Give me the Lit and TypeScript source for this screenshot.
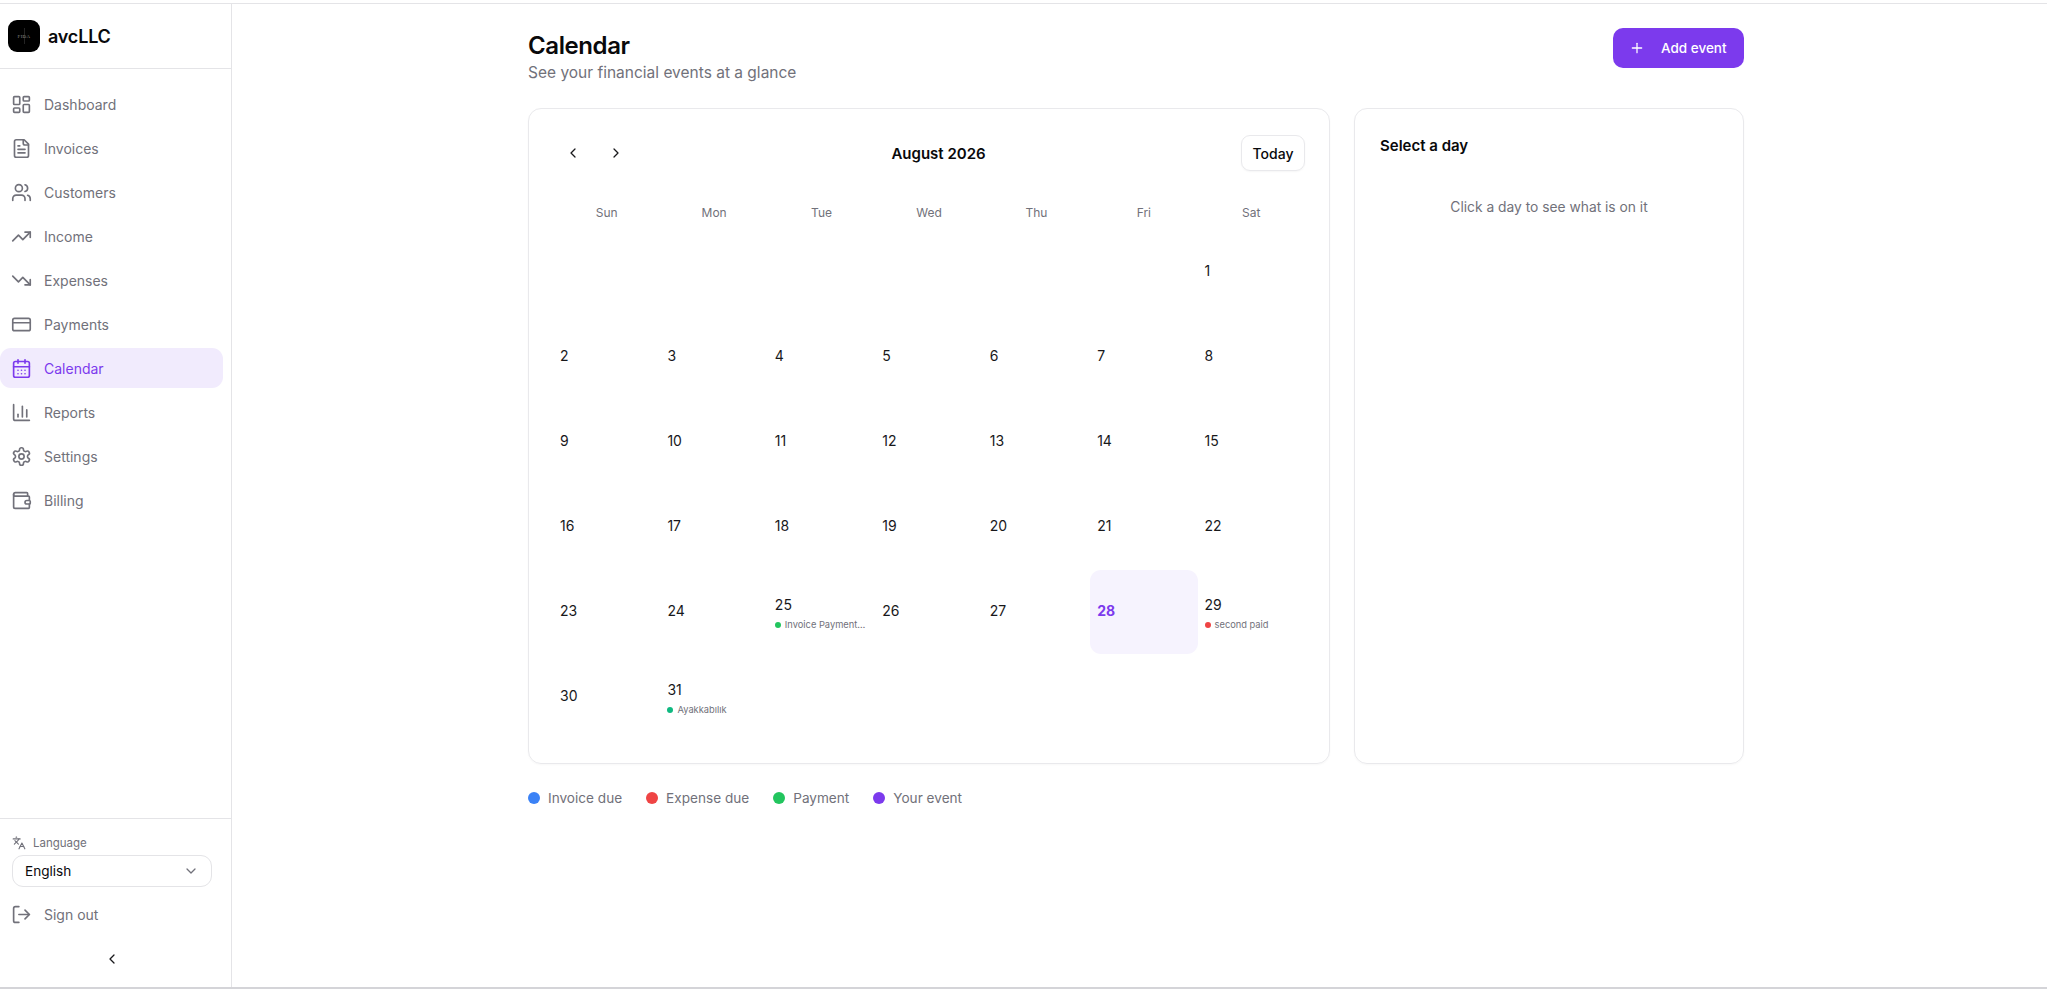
import { LitElement, html, css, svg } from 'lit';
import { customElement } from 'lit/decorators.js';

const icons: Record<string, unknown> = {
  dashboard: svg`<rect width="7" height="9" x="3" y="3" rx="1"/><rect width="7" height="5" x="14" y="3" rx="1"/><rect width="7" height="9" x="14" y="12" rx="1"/><rect width="7" height="5" x="3" y="16" rx="1"/>`,
  file: svg`<path d="M15 2H6a2 2 0 0 0-2 2v16a2 2 0 0 0 2 2h12a2 2 0 0 0 2-2V7Z"/><path d="M14 2v4a2 2 0 0 0 2 2h4"/><path d="M10 9H8"/><path d="M16 13H8"/><path d="M16 17H8"/>`,
  users: svg`<path d="M16 21v-2a4 4 0 0 0-4-4H6a4 4 0 0 0-4 4v2"/><circle cx="9" cy="7" r="4"/><path d="M22 21v-2a4 4 0 0 0-3-3.87"/><path d="M16 3.13a4 4 0 0 1 0 7.75"/>`,
  up: svg`<polyline points="22 7 13.5 15.5 8.5 10.5 2 17"/><polyline points="16 7 22 7 22 13"/>`,
  down: svg`<polyline points="22 17 13.5 8.5 8.5 13.5 2 7"/><polyline points="16 17 22 17 22 11"/>`,
  card: svg`<rect width="20" height="14" x="2" y="5" rx="2"/><line x1="2" x2="22" y1="10" y2="10"/>`,
  calendar: svg`<path d="M8 2v4"/><path d="M16 2v4"/><rect width="18" height="18" x="3" y="4" rx="2"/><path d="M3 10h18"/><path d="M8 14h.01"/><path d="M12 14h.01"/><path d="M16 14h.01"/><path d="M8 18h.01"/><path d="M12 18h.01"/><path d="M16 18h.01"/>`,
  chart: svg`<path d="M3 3v16a2 2 0 0 0 2 2h16"/><path d="M18 17V9"/><path d="M13 17V5"/><path d="M8 17v-3"/>`,
  gear: svg`<path d="M12.22 2h-.44a2 2 0 0 0-2 2v.18a2 2 0 0 1-1 1.73l-.43.25a2 2 0 0 1-2 0l-.15-.08a2 2 0 0 0-2.73.73l-.22.38a2 2 0 0 0 .73 2.73l.15.1a2 2 0 0 1 1 1.72v.51a2 2 0 0 1-1 1.74l-.15.09a2 2 0 0 0-.73 2.73l.22.38a2 2 0 0 0 2.73.73l.15-.08a2 2 0 0 1 2 0l.43.25a2 2 0 0 1 1 1.73V20a2 2 0 0 0 2 2h.44a2 2 0 0 0 2-2v-.18a2 2 0 0 1 1-1.73l.43-.25a2 2 0 0 1 2 0l.15.08a2 2 0 0 0 2.73-.73l.22-.39a2 2 0 0 0-.73-2.73l-.15-.08a2 2 0 0 1-1-1.74v-.5a2 2 0 0 1 1-1.74l.15-.09a2 2 0 0 0 .73-2.73l-.22-.38a2 2 0 0 0-2.73-.73l-.15.08a2 2 0 0 1-2 0l-.43-.25a2 2 0 0 1-1-1.73V4a2 2 0 0 0-2-2z"/><circle cx="12" cy="12" r="3"/>`,
  wallet: svg`<path d="M19 7V4a1 1 0 0 0-1-1H5a2 2 0 0 0 0 4h15a1 1 0 0 1 1 1v4h-3a2 2 0 0 0 0 4h3a1 1 0 0 0 1-1v-2a1 1 0 0 0-1-1"/><path d="M3 5v14a2 2 0 0 0 2 2h15a1 1 0 0 0 1-1v-4"/>`,
  languages: svg`<path d="m5 8 6 6"/><path d="m4 14 6-6 2-3"/><path d="M2 5h12"/><path d="M7 2h1"/><path d="m22 22-5-10-5 10"/><path d="M14 18h6"/>`,
  logout: svg`<path d="M9 21H5a2 2 0 0 1-2-2V5a2 2 0 0 1 2-2h4"/><polyline points="16 17 21 12 16 7"/><line x1="21" x2="9" y1="12" y2="12"/>`,
  left: svg`<path d="m15 18-6-6 6-6"/>`,
  right: svg`<path d="m9 18 6-6-6-6"/>`,
  chevronDown: svg`<path d="m6 9 6 6 6-6"/>`,
  plus: svg`<path d="M5 12h14"/><path d="M12 5v14"/>`,
};

const icon = (name: string, size = 21) => html`<svg
  width=${size}
  height=${size}
  viewBox="0 0 24 24"
  fill="none"
  stroke="currentColor"
  stroke-width="1.9"
  stroke-linecap="round"
  stroke-linejoin="round"
>${icons[name]}</svg>`;

const navItems = [
  ['dashboard', 'Dashboard'],
  ['file', 'Invoices'],
  ['users', 'Customers'],
  ['up', 'Income'],
  ['down', 'Expenses'],
  ['card', 'Payments'],
  ['calendar', 'Calendar'],
  ['chart', 'Reports'],
  ['gear', 'Settings'],
  ['wallet', 'Billing'],
];

const events: Record<number, { label: string; color: string }> = {
  25: { label: 'Invoice Payment…', color: '#22c55e' },
  29: { label: 'second paid', color: '#ef4444' },
  31: { label: 'Ayakkabılık', color: '#10b981' },
};

const legend = [
  ['#3b82f6', 'Invoice due'],
  ['#ef4444', 'Expense due'],
  ['#22c55e', 'Payment'],
  ['#7c3aed', 'Your event'],
];

@customElement('app-root')
export class AppRoot extends LitElement {
  static styles = css`
    :host {
      display: block;
      height: 989px;
      box-sizing: border-box;
      padding-top: 3px;
      overflow: hidden;
      background: #fff;
      color: #09090b;
      font-family: 'Inter', 'Noto Sans', sans-serif;
    }
    * {
      box-sizing: border-box;
    }
    svg {
      display: block;
      flex: none;
    }
    .shell {
      display: flex;
      height: 986px;
      border-top: 1px solid #e4e4e7;
      border-bottom: 2px solid #d4d4d8;
    }
    .sidebar {
      width: 232px;
      flex: none;
      display: flex;
      flex-direction: column;
      border-right: 1px solid #e4e4e7;
    }
    .brand {
      height: 65px;
      display: flex;
      align-items: center;
      gap: 8px;
      padding: 0 8px;
      border-bottom: 1px solid #e4e4e7;
      font-size: 18px;
      font-weight: 600;
      letter-spacing: -0.2px;
    }
    .logo {
      width: 32px;
      height: 32px;
      border-radius: 9px;
      background: #000;
      display: flex;
      align-items: center;
      justify-content: center;
      position: relative;
      color: #8a8a8a;
      font-family: 'Liberation Serif', serif;
      font-size: 5px;
      font-weight: 400;
      letter-spacing: 0.3px;
    }
    .logo::after {
      content: '';
      position: absolute;
      left: 50%;
      top: 8px;
      bottom: 8px;
      width: 1px;
      background: rgba(255, 255, 255, 0.14);
    }
    nav {
      flex: 1;
      display: flex;
      flex-direction: column;
      gap: 4px;
      padding: 15px 8px 0 0;
    }
    .item {
      height: 40px;
      display: flex;
      align-items: center;
      gap: 12px;
      padding-left: 11px;
      border-radius: 11px;
      color: #71717a;
      font-size: 14px;
    }
    .item.active {
      background: #f1ebfd;
      color: #7c3aed;
    }
    .foot {
      border-top: 1px solid #e4e4e7;
      padding: 15px 19px 0 12px;
      height: 169px;
    }
    .lang {
      display: flex;
      align-items: center;
      gap: 7px;
      color: #71717a;
      font-size: 11.5px;
      height: 18px;
      margin-bottom: 3px;
    }
    .select {
      height: 32px;
      border: 1px solid #e4e4e7;
      border-radius: 11px;
      display: flex;
      align-items: center;
      justify-content: space-between;
      padding: 0 12px;
      font-size: 13.6px;
    }
    .select svg {
      color: #71717a;
    }
    .signout {
      margin: 7px 0 0 -12px;
    }
    .collapse {
      display: flex;
      justify-content: center;
      margin: 17px 0 0 0;
      color: #18181b;
    }
    main {
      flex: 1;
      padding: 24px 0 0 296px;
    }
    .page {
      width: 1216px;
    }
    .head {
      display: flex;
      justify-content: space-between;
      align-items: flex-start;
      height: 80px;
    }
    h1 {
      margin: 3px 0 0;
      font-size: 24px;
      line-height: 30px;
      font-weight: 600;
      letter-spacing: -0.4px;
    }
    .sub {
      color: #71717a;
      font-size: 15.5px;
      line-height: 22px;
      margin-top: 1px;
    }
    .add {
      width: 131px;
      height: 40px;
      border-radius: 10px;
      background: #7c3aed;
      color: #fff;
      display: flex;
      align-items: center;
      gap: 16px;
      padding-left: 16px;
      font-size: 13.5px;
      font-weight: 500;
    }
    .cols {
      display: grid;
      grid-template-columns: 802px 390px;
      gap: 24px;
    }
    .card {
      height: 656px;
      border: 1px solid #e9e9ec;
      border-radius: 13px;
      box-shadow: 0 1px 2px rgba(0, 0, 0, 0.03);
    }
    .cal {
      padding: 26px 24px 0;
    }
    .bar {
      height: 36px;
      display: flex;
      align-items: center;
      justify-content: space-between;
    }
    .navs {
      display: flex;
      gap: 3px;
      color: #18181b;
    }
    .navs div {
      width: 40px;
      height: 36px;
      display: flex;
      align-items: center;
      justify-content: center;
    }
    .month {
      font-size: 15px;
      font-weight: 600;
    }
    .today {
      width: 64px;
      height: 36px;
      border: 1px solid #e9e9ec;
      border-radius: 9px;
      display: flex;
      align-items: center;
      justify-content: center;
      font-size: 14px;
      font-weight: 500;
      box-shadow: 0 1px 2px rgba(0, 0, 0, 0.04);
    }
    .weekdays,
    .days {
      display: grid;
      grid-template-columns: repeat(7, 1fr);
    }
    .weekdays {
      height: 59px;
      align-items: center;
      text-align: center;
      font-size: 12px;
      color: #71717a;
      padding-top: 23px;
    }
    .days {
      row-gap: 1px;
    }
    .day {
      height: 84px;
      min-width: 0;
      padding: 0 7px 4px;
      border-radius: 11px;
      display: flex;
      flex-direction: column;
      justify-content: center;
      font-size: 14px;
      color: #18181b;
    }
    .day.selected {
      background: #f6f3fe;
      color: #7c3aed;
      font-weight: 700;
    }
    .event {
      display: flex;
      align-items: center;
      gap: 4px;
      margin: 6px 0 -6px;
      font-size: 9.3px;
      color: #71717a;
      font-weight: 400;
      white-space: nowrap;
    }
    .event .pip {
      width: 6px;
      height: 6px;
      border-radius: 50%;
      flex: none;
    }
    .detail {
      padding: 25px 24px 24px 25px;
    }
    h2 {
      margin: 0;
      font-size: 15px;
      line-height: 24px;
      font-weight: 600;
    }
    .empty {
      margin: 38px 0 0 -1px;
      text-align: center;
      color: #71717a;
      font-size: 13.8px;
      line-height: 22px;
    }
    .legend {
      display: flex;
      gap: 24px;
      margin-top: 23px;
      font-size: 13.6px;
      line-height: 22px;
      color: #71717a;
    }
    .legend div {
      display: flex;
      align-items: center;
      gap: 8px;
    }
    .legend i {
      width: 12px;
      height: 12px;
      border-radius: 50%;
    }
  `;

  render() {
    const cells = [];
    for (let i = 0; i < 6; i++) cells.push(html`<div class="day"></div>`);
    for (let d = 1; d <= 31; d++) {
      const ev = events[d];
      cells.push(html`<div class="day ${d === 28 ? 'selected' : ''}">
        <div>${d}</div>
        ${ev
          ? html`<div class="event">
              <span class="pip" style="background:${ev.color}"></span>
              <span>${ev.label}</span>
            </div>`
          : ''}
      </div>`);
    }

    return html`
      <div class="shell">
        <aside class="sidebar">
          <div class="brand"><div class="logo">FIDA</div>avcLLC</div>
          <nav>
            ${navItems.map(
              ([ic, label]) => html`<div class="item ${label === 'Calendar' ? 'active' : ''}">
                ${icon(ic)}<span>${label}</span>
              </div>`
            )}
          </nav>
          <div class="foot">
            <div class="lang">${icon('languages', 14)}<span>Language</span></div>
            <div class="select"><span>English</span>${icon('chevronDown', 16)}</div>
            <div class="item signout">${icon('logout')}<span>Sign out</span></div>
            <div class="collapse">${icon('left', 16)}</div>
          </div>
        </aside>
        <main>
          <div class="page">
            <div class="head">
              <div>
                <h1>Calendar</h1>
                <div class="sub">See your financial events at a glance</div>
              </div>
              <div class="add">${icon('plus', 16)}<span>Add event</span></div>
            </div>
            <div class="cols">
              <section class="card cal">
                <div class="bar">
                  <div class="navs">
                    <div>${icon('left', 16)}</div>
                    <div>${icon('right', 16)}</div>
                  </div>
                  <div class="month">August 2026</div>
                  <div class="today">Today</div>
                </div>
                <div class="weekdays">
                  ${['Sun', 'Mon', 'Tue', 'Wed', 'Thu', 'Fri', 'Sat'].map((d) => html`<div>${d}</div>`)}
                </div>
                <div class="days">${cells}</div>
              </section>
              <section class="card detail">
                <h2>Select a day</h2>
                <div class="empty">Click a day to see what is on it</div>
              </section>
            </div>
            <div class="legend">
              ${legend.map(([c, t]) => html`<div><i style="background:${c}"></i>${t}</div>`)}
            </div>
          </div>
        </main>
      </div>
    `;
  }
}
